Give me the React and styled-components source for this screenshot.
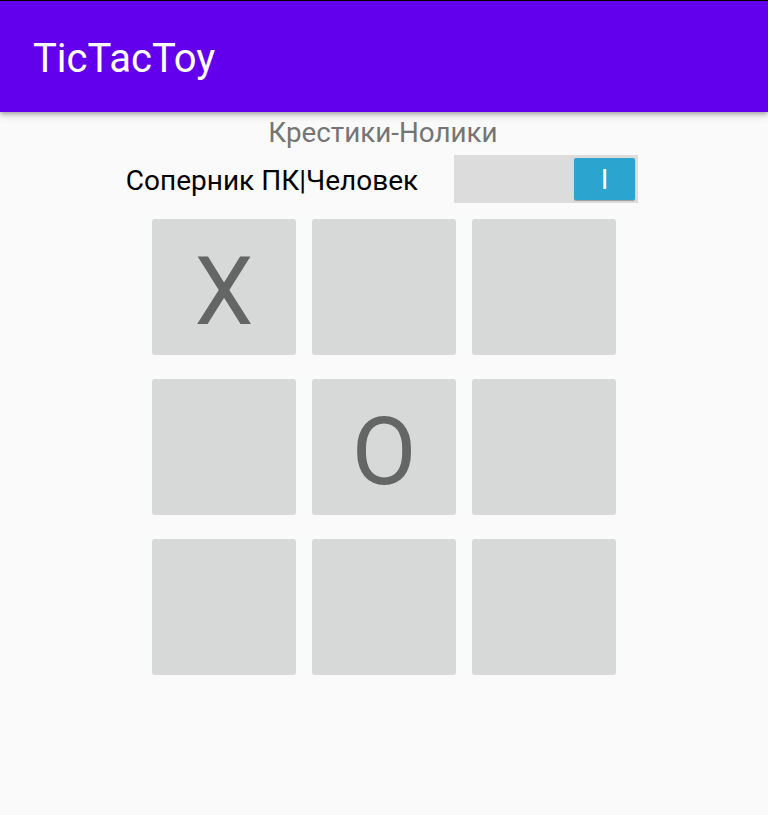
import React from 'react';
import styled, { createGlobalStyle } from 'styled-components';

const GlobalStyle = createGlobalStyle`
  html, body {
    margin: 0;
    padding: 0;
    background: #fafafa;
    font-family: Roboto, "Noto Sans", sans-serif;
  }
`;

const Screen = styled.div`
  width: 768px;
  height: 815px;
  background: #fafafa;
  border-top: 1px solid #000;
  box-sizing: border-box;
  overflow: hidden;
`;

const AppBar = styled.header`
  height: 111px;
  background: #6200ee;
  display: flex;
  align-items: center;
  padding-left: 33px;
  box-shadow: 0 2px 4px rgba(0, 0, 0, 0.25), 0 4px 8px rgba(0, 0, 0, 0.12);
  position: relative;
`;

const AppTitle = styled.h1`
  margin: 0;
  font-size: 40px;
  font-weight: 400;
  color: #fff;
  padding-top: 4px;
`;

const Content = styled.main`
  display: flex;
  flex-direction: column;
  align-items: center;
`;

const Caption = styled.div`
  margin-top: 4px;
  font-size: 27.8px;
  line-height: 34px;
  color: #757575;
  padding-right: 2px;
`;

const OpponentRow = styled.div`
  display: flex;
  align-items: center;
  gap: 36px;
  margin-top: 5px;
  padding-right: 4px;
`;

const Label = styled.span`
  font-size: 28px;
  color: #000;
  padding-top: 2px;
`;

const Track = styled.div`
  width: 184px;
  height: 48px;
  background: #dcdcdc;
  display: flex;
  align-items: center;
  justify-content: flex-end;
  padding-right: 3px;
  box-sizing: border-box;
`;

const Thumb = styled.div`
  width: 61px;
  height: 42px;
  background: #2ba4cf;
  border-radius: 2px;
  box-shadow: 0 1px 1px rgba(0, 0, 0, 0.3);
  color: #fff;
  font-size: 28px;
  display: flex;
  align-items: center;
  justify-content: center;
`;

const Board = styled.div`
  margin-top: 16px;
  display: grid;
  grid-template-columns: repeat(3, 144px);
  grid-auto-rows: 136px;
  column-gap: 16px;
  row-gap: 24px;
`;

const Cell = styled.button`
  border: none;
  padding: 10px 0 0;
  margin: 0;
  background: #d7d8d8;
  border-radius: 3px;
  font-family: Roboto, sans-serif;
  font-size: 94px;
  font-weight: 400;
  color: #646565;
  display: flex;
  align-items: center;
  justify-content: center;
  line-height: 1;
`;

const cells = ['X', '', '', '', 'O', '', '', '', ''];

export default function App() {
  return (
    <Screen>
      <GlobalStyle />
      <AppBar>
        <AppTitle>TicTacToy</AppTitle>
      </AppBar>
      <Content>
        <Caption>Крестики-Нолики</Caption>
        <OpponentRow>
          <Label>Соперник ПК|Человек</Label>
          <Track>
            <Thumb>I</Thumb>
          </Track>
        </OpponentRow>
        <Board>
          {cells.map((v, i) => (
            <Cell key={i}>{v}</Cell>
          ))}
        </Board>
      </Content>
    </Screen>
  );
}
